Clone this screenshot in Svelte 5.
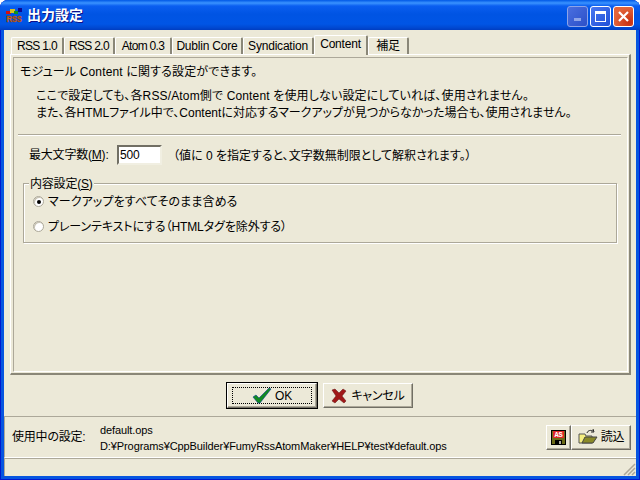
<script>
  const tabs = [
    { label: 'RSS 1.0', w: 53, tight: true },
    { label: 'RSS 2.0', w: 51, tight: true },
    { label: 'Atom 0.3', w: 57, tight: true },
    { label: 'Dublin Core', w: 71 },
    { label: 'Syndication', w: 71 },
    { label: 'Content', w: 54, active: true },
    { label: '補足', w: 41 }
  ];
</script>

<div class="window">
  <header class="titlebar">
    <svg class="appicon" width="18" height="20" viewBox="0 0 18 20">
      <rect x="1" y="4" width="5" height="3" fill="#d01010"/>
      <rect x="5" y="2" width="5" height="4" fill="#d8c020"/>
      <rect x="9" y="4" width="4" height="3" fill="#109020"/>
      <rect x="13" y="1" width="4" height="4" fill="#0a0a90"/>
      <text class="icontext" x="9" y="15" text-anchor="middle" textLength="15" lengthAdjust="spacingAndGlyphs">RSS</text>
    </svg>
    <span class="title">出力設定</span>
    <div class="wbtns">
      <div class="wbtn min"><span class="minbar"></span></div>
      <div class="wbtn max"><span class="maxbox"></span></div>
      <div class="wbtn close">
        <svg width="13" height="13" viewBox="0 0 13 13"><path d="M2 2l9 9M11 2l-9 9" stroke="#fff" stroke-width="2.2"/></svg>
      </div>
    </div>
  </header>

  <div class="client">
    <div class="tabarea">
      <div class="tabstrip">
        {#each tabs as t}
          <div class="tab" class:active={t.active} class:tight={t.tight} style="width:{t.w}px">{t.label}</div>
        {/each}
      </div>
      <div class="pageouter">
        <div class="page">
          <p class="lead">モジュール Content に関する設定ができます。</p>
          <div class="note">
            <p class="wide">ここで設定しても、各RSS/Atom側で Content を使用しない設定にしていれば、使用されません。</p>
            <p>また、各HTMLファイル中で、Contentに対応するマークアップが見つからなかった場合も、使用されません。</p>
          </div>
          <div class="sep"></div>
          <div class="maxrow">
            <span class="maxlabel">最大文字数(<u>M</u>):</span>
            <div class="input">500</div>
            <span class="hint">（値に 0 を指定すると、文字数無制限として解釈されます。）</span>
          </div>
          <div class="group">
            <span class="legend">内容設定(<u>S</u>)</span>
            <div class="radio first"><span class="dot on"></span>マークアップをすべてそのまま含める</div>
            <div class="radio second"><span class="dot"></span>プレーンテキストにする（HTMLタグを除外する）</div>
          </div>
        </div>
      </div>
    </div>

    <div class="actions">
      <button class="btn default">
        <span class="focus">
          <svg width="20" height="17" viewBox="0 0 20 17"><path d="M1 10l3-2 3 3 10-10 2 1-11 14h-2z" fill="#108a20" stroke="#0a3a90" stroke-width="0.6"/></svg>
          OK
        </span>
      </button>
      <button class="btn">
        <svg width="16" height="16" viewBox="0 0 16 16"><path d="M1 2l3-1 4 4 4-4 3 2-4 5 4 5-2 2-5-4-4 4-3-2 4-5z" fill="#a01818" stroke="#601010" stroke-width="0.5"/></svg>
        キャンセル
      </button>
    </div>

    <div class="current">
      <span class="curlabel">使用中の設定:</span>
      <div class="paths">
        <div>default.ops</div>
        <div>D:¥Programs¥CppBuilder¥FumyRssAtomMaker¥HELP¥test¥default.ops</div>
      </div>
      <button class="btn small save">
        <svg width="15" height="15" viewBox="0 0 15 15">
          <rect x="0.5" y="0.5" width="14" height="14" fill="#6b6b18" stroke="#000"/>
          <rect x="2" y="1" width="11" height="7" fill="#e02828"/>
          <text class="astext" x="7.5" y="7" text-anchor="middle">AS</text>
          <rect x="4" y="10" width="7" height="4" fill="#000"/>
          <rect x="8" y="11" width="2" height="3" fill="#b0b0a0"/>
        </svg>
      </button>
      <button class="btn small load">
        <svg width="20" height="16" viewBox="0 0 20 16">
          <path d="M1 5h6l1 2h6v7H1z" fill="#f4ee80" stroke="#555"/>
          <path d="M4 14l3-6h12l-4 6z" fill="#8a8a28" stroke="#444"/>
          <path d="M9 4c1-3 4-3 6-2M15 0l1 3-3 0" fill="none" stroke="#222"/>
        </svg>
        読込
      </button>
    </div>

    <div class="status">
      <svg class="grip" width="13" height="13" viewBox="0 0 13 13">
        <path d="M12 1L1 12M12 5L5 12M12 9L9 12" stroke="#aca899" stroke-width="1.5"/>
      </svg>
    </div>
  </div>
</div>

<style>
  :global(body) { margin: 0; background: #fff; }
  * { box-sizing: border-box; }
  p { margin: 0; white-space: nowrap; }
  .window {
    width: 640px; height: 480px; display: flex; flex-direction: column;
    background: #0655e0; box-shadow: inset 1px 0 #0019cf, inset -1px 0 #0019cf, inset 0 -1px #0019cf;
    border-radius: 8px 8px 0 0; overflow: hidden;
    font: 12px/16px "Liberation Sans", "Noto Sans CJK JP", sans-serif; color: #000;
    font-feature-settings: "palt"; letter-spacing: -0.2px;
  }
  .titlebar {
    height: 30px; flex: none; display: flex; align-items: center; padding: 0 6px 0 5px;
    background: linear-gradient(#0058e6 0, #3a93ff 3px, #0a5ef0 6px, #0054e3 14px, #0055e5 24px, #0047d0 28px, #003dc0 30px);
  }
  .appicon { margin: 3px 4px 0 0; flex: none; }
  .icontext { font: 700 9px "Liberation Sans", sans-serif; fill: #f07810; stroke: #803000; stroke-width: 0.4px; }
  .astext { font: 700 7px "Liberation Mono", monospace; fill: #fff; }
  .title { color: #fff; font-weight: 700; font-size: 14px; letter-spacing: 0; font-feature-settings: normal; text-shadow: 1px 1px #0f1089; flex: 1; }
  .wbtns { display: flex; gap: 2px; margin-top: 2px; }
  .wbtn {
    width: 21px; height: 21px; border: 1px solid #fff; border-radius: 3px;
    display: flex; align-items: center; justify-content: center; position: relative;
  }
  .min { background: linear-gradient(135deg, #4a6fe0, #2c50c8); border-color: #8ea4e8; }
  .minbar { width: 7px; height: 3px; background: #8ea4e8; margin-top: 6px; }
  .max { background: linear-gradient(135deg, #4a78f0, #2050d8); }
  .maxbox { width: 11px; height: 11px; border: 1px solid #fff; border-top-width: 3px; }
  .close { background: radial-gradient(circle at 80% 80%, #c83010, #e2643a 70%); }
  .client {
    flex: 1; margin: 0 4px 4px; background: #ece9d8; display: flex; flex-direction: column; min-height: 0;
  }
  .tabarea { flex: none; height: 345px; padding: 5px 5px 0 6px; display: flex; flex-direction: column; }
  .tabstrip { display: flex; height: 19px; align-items: flex-end; padding-left: 1px; flex: none; }
  .tab {
    height: 17px; border: 1px solid #fff; border-bottom: 0; border-right: 2px solid #8a8778;
    border-radius: 2px 2px 0 0; text-align: center; line-height: 17px; white-space: nowrap;
  }
  .tab.tight { letter-spacing: -0.7px; }
  .tab.active { height: 20px; line-height: 17px; margin-bottom: -1px; background: #ece9d8; position: relative; z-index: 1; }
  .pageouter {
    flex: 1; border-top: 1px solid #fff; border-left: 1px solid #fff; border-right: 2px solid; border-bottom: 2px solid;
    border-right-color: #8a8778; border-bottom-color: #8a8778;
    padding: 2px 1px 1px 2px; min-height: 0;
  }
  .page {
    height: 100%; border-top: 1px solid #aca899; border-left: 1px solid #aca899;
    border-right: 1px solid #fff; border-bottom: 1px solid #fff; padding: 6px 6px 0 6px;
  }
  .lead { height: 16px; letter-spacing: 0.15px; }
  .note { margin: 8px 0 0 16px; letter-spacing: 0; }
  .note p { height: 17px; }
  .note .wide { letter-spacing: 0.15px; }
  .sep { height: 2px; margin: 12px 0 0 -2px; background: #aca899; border-bottom: 1px solid #fff; }
  .maxrow { display: flex; align-items: center; margin: 9px 0 0 9px; height: 20px; }
  .maxlabel { width: 88px; white-space: nowrap; }
  .input {
    width: 45px; height: 20px; background: #fff; border: 2px solid; border-color: #716f64 #f1efe2 #f1efe2 #716f64;
    padding-left: 1px; line-height: 16px;
  }
  .hint { margin-left: 11px; padding-top: 1px; white-space: nowrap; letter-spacing: 0; }
  .group {
    margin: 18px 0 0 3px; width: 594px; height: 60px; border: 1px solid #aca899; box-shadow: inset 1px 1px #fff, 1px 1px #fff;
    padding: 5px 0 0 9px; position: relative;
  }
  .legend { position: absolute; left: 5px; top: -8px; padding: 0 1px; line-height: 16px; background: #ece9d8; }
  .radio { display: flex; align-items: center; height: 25px; gap: 4px; white-space: nowrap; letter-spacing: 0; }
  .radio.first { letter-spacing: 0.1px; }
  .radio.second { letter-spacing: -0.1px; }
  .dot {
    width: 11px; height: 11px; border-radius: 50%; background: #fff; border: 1px solid #aca899;
    box-shadow: inset 1px 1px #c8c4b4; display: flex; align-items: center; justify-content: center;
  }
  .dot.on::after { content: ""; width: 4px; height: 4px; border-radius: 50%; background: #000; }
  .actions { flex: none; height: 41px; display: flex; justify-content: center; align-items: center; gap: 6px; }
  .btn {
    font: inherit; letter-spacing: inherit; font-feature-settings: inherit;
    width: 90px; height: 25px; background: #ece9d8; display: flex; align-items: center; justify-content: center; gap: 4px;
    border: 1px solid; border-color: #fff #716f64 #716f64 #fff; padding: 0; color: #000;
    box-shadow: inset -1px -1px #aca899;
  }
  .default { outline: 1px solid #000; outline-offset: 0; }
  .focus { display: flex; align-items: center; justify-content: center; gap: 3px; width: 80px; height: 17px; border: 1px dotted #000; }
  .current {
    flex: none; height: 42px; border-top: 1px solid #aca899; border-bottom: 1px solid #fff; border-left: 1px solid #aca899;
    display: flex; align-items: center; padding: 0 5px 0 7px;
  }
  .curlabel { width: 88px; white-space: nowrap; }
  .paths { flex: 1; line-height: 16px; padding-top: 1px; font-size: 11px; letter-spacing: -0.1px; white-space: nowrap; }
  .small { height: 25px; }
  .save { width: 25px; }
  .load { width: 60px; gap: 3px; }
  .status { flex: 1; border-top: 1px solid #aca899; border-left: 1px solid #aca899; display: flex; justify-content: flex-end; align-items: flex-end; }
  .grip { display: block; }
</style>
